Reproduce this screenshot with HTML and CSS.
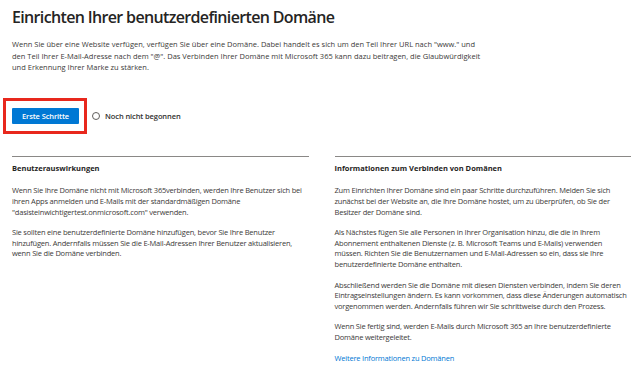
FILE: index.html
```html
<!DOCTYPE html>
<html lang="de">
<head>
<meta charset="utf-8">
<title>Domäne einrichten</title>
<link rel="stylesheet" href="styles.css">
</head>
<body>
<main class="page">
  <h1 class="title">Einrichten Ihrer benutzerdefinierten Domäne</h1>
  <p class="intro">Wenn Sie über eine Website verfügen, verfügen Sie über eine Domäne. Dabei handelt es sich um den Teil Ihrer URL nach "www." und den Teil Ihrer E-Mail-Adresse nach dem "@". Das Verbinden Ihrer Domäne mit Microsoft 365 kann dazu beitragen, die Glaubwürdigkeit und Erkennung Ihrer Marke zu stärken.</p>
  <div class="actions">
    <div class="highlight">
      <button class="primary" type="button">Erste Schritte</button>
    </div>
    <div class="status">
      <span class="radio"></span>
      <span>Noch nicht begonnen</span>
    </div>
  </div>
  <div class="columns">
    <section class="col">
      <h2 class="col-title">Benutzerauswirkungen</h2>
      <p>Wenn Sie Ihre Domäne nicht mit Microsoft 365verbinden, werden Ihre Benutzer sich bei ihren Apps anmelden und E-Mails mit der standardmäßigen Domäne "dasisteinwichtigertest.onmicrosoft.com" verwenden.</p>
      <p>Sie sollten eine benutzerdefinierte Domäne hinzufügen, bevor Sie Ihre Benutzer hinzufügen. Andernfalls müssen Sie die E-Mail-Adressen Ihrer Benutzer aktualisieren, wenn Sie die Domäne verbinden.</p>
    </section>
    <section class="col">
      <h2 class="col-title">Informationen zum Verbinden von Domänen</h2>
      <p>Zum Einrichten Ihrer Domäne sind ein paar Schritte durchzuführen. Melden Sie sich zunächst bei der Website an, die Ihre Domäne hostet, um zu überprüfen, ob Sie der Besitzer der Domäne sind.</p>
      <p>Als Nächstes fügen Sie alle Personen in Ihrer Organisation hinzu, die die in Ihrem Abonnement enthaltenen Dienste (z. B. Microsoft Teams und E-Mails) verwenden müssen. Richten Sie die Benutzernamen und E-Mail-Adressen so ein, dass sie Ihre benutzerdefinierte Domäne enthalten.</p>
      <p>Abschließend werden Sie die Domäne mit diesen Diensten verbinden, indem Sie deren Eintragseinstellungen ändern. Es kann vorkommen, dass diese Änderungen automatisch vorgenommen werden. Andernfalls führen wir Sie schrittweise durch den Prozess.</p>
      <p>Wenn Sie fertig sind, werden E-Mails durch Microsoft 365 an Ihre benutzerdefinierte Domäne weitergeleitet.</p>
      <p><a class="link" href="#">Weitere Informationen zu Domänen</a></p>
    </section>
  </div>
</main>
</body>
</html>
```

FILE: styles.css
```css
* { box-sizing: border-box; }
html, body { margin: 0; padding: 0; background: #ffffff; }
body {
  font-family: "Open Sans", "Noto Sans", "Liberation Sans", sans-serif;
  color: #323130;
}
.page {
  padding: 6px 9px 0 12px;
}
.title {
  margin: 0;
  font-size: 16px;
  font-weight: 600;
  line-height: 22px;
  color: #252423;
  letter-spacing: -0.65px;
}
.intro {
  margin: 11px 0 0;
  font-size: 7.5px;
  line-height: 11.5px;
  color: #3b3a39;
  max-width: 470px;
}
.actions {
  display: flex;
  align-items: center;
  margin-top: 24px;
}
.highlight {
  margin-left: -9px;
  border: 3px solid #e8281d;
  padding: 7px 5px 7px 6px;
  display: flex;
}
.primary {
  width: 67px;
  height: 16px;
  padding: 0;
  border: 0;
  border-radius: 1px;
  background: #0078d4;
  color: #ffffff;
  font-family: inherit;
  font-size: 7.5px;
  font-weight: 600;
  letter-spacing: -0.1px;
}
.status {
  display: flex;
  align-items: center;
  gap: 5px;
  margin-left: 5px;
  font-size: 7.5px;
  font-weight: 600;
  color: #323130;
  letter-spacing: -0.1px;
}
.radio {
  width: 8px;
  height: 8px;
  border: 1px solid #605e5c;
  border-radius: 50%;
}
.columns {
  display: grid;
  grid-template-columns: 1fr 1fr;
  column-gap: 26px;
  margin-top: 22px;
}
.col {
  border-top: 1px solid #8a8886;
  padding-top: 6px;
}
.col-title {
  margin: 0;
  font-size: 7.5px;
  font-weight: 700;
  line-height: 11px;
  color: #252423;
}
.col p {
  margin: 9.5px 0 0;
  font-size: 7.5px;
  line-height: 10.8px;
  color: #3b3a39;
  letter-spacing: -0.2px;
}
.col .col-title + p { margin-top: 11.5px; }
.link {
  color: #0078d4;
  text-decoration: none;
}
```
